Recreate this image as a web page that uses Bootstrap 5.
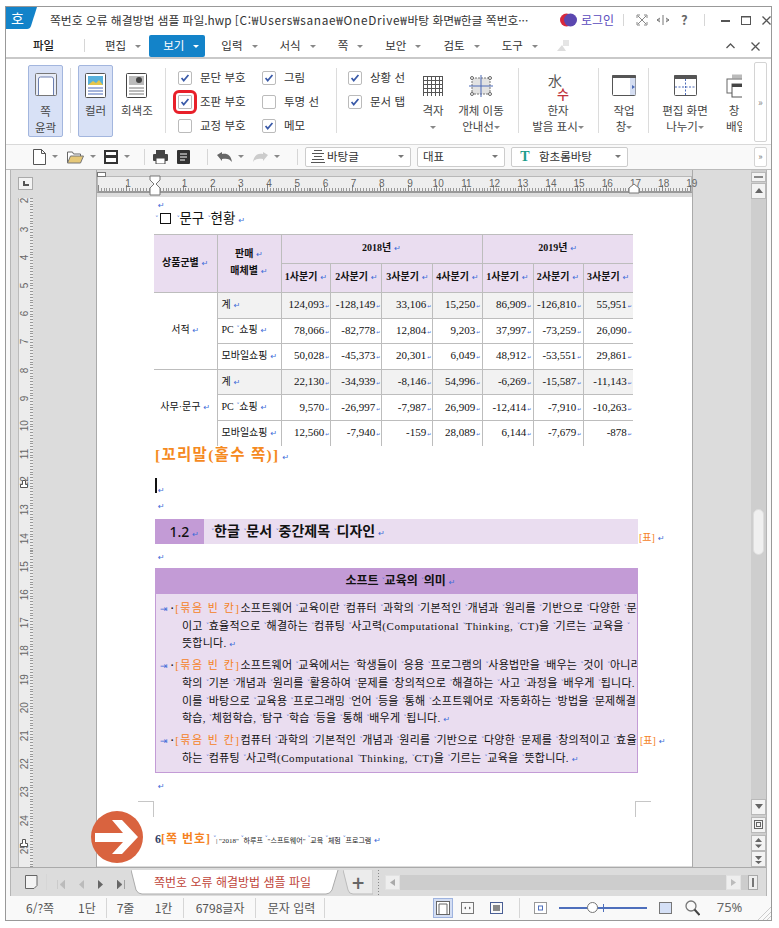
<!doctype html>
<html lang="ko">
<head>
<meta charset="UTF-8" />
<title>쪽번호 오류 해결방법 샘플 파일.hwp</title>
<link href="https://cdn.jsdelivr.net/npm/bootstrap@5.3.0/dist/css/bootstrap.min.css" rel="stylesheet" />
<style>
  html, body { background: #fff; overflow: hidden; }
  body { font-family: "Noto Sans CJK KR", "Liberation Sans", sans-serif; font-size: 11px; color: #333; }
  .hw-win { width: 767px; height: 915px; margin: 6px 0 0 5px; border: 1px solid #999; background: #f9f9f9; }

  /* title + menu */
  .hw-title { height: 28px; background: #fff; padding-bottom: 2px; }
  .hw-logo { width: 31px; flex: none; }
  .hw-logo svg { display: block; }
  .hw-logo-t { position: absolute; left: 5px; top: 1px; color: #fff; font-size: 14px; font-weight: 400; line-height: 20px; }
  .hw-fname { width: 495px; margin-left: 13px; font-size: 11.8px; color: #333; white-space: nowrap; overflow: hidden; }
  .hw-path { letter-spacing: .7px; }
  .hw-orb { margin-left: 15px; }
  .hw-login { margin-left: 4px; font-size: 12px; color: #5a4bbd; width: 34px; white-space: nowrap; }
  .vsep { width: 1px; background: #d6d6d6; flex: none; }
  .vsep-t { height: 12px; margin: 0 8px; }
  .hw-help { margin-left: 11px; font-size: 13px; color: #666; font-weight: 700; }
  .hw-gap-a { margin-left: 8px; }
  .hw-gap-b { margin-left: 11px; }
  .hw-menu { height: 24px; background: #fff; border-bottom: 2px solid #c9c9c9; padding-left: 27px; }
  .mn-i { padding: 0 14px 0 8px; height: 22px; line-height: 20px; font-size: 11.5px; color: #333; white-space: nowrap; flex: none; }
  .mn-first { padding: 0 8px 0 8px; }
  .mn-file { width: 64px; font-size: 11.5px; line-height: 20px; height: 22px; font-weight: 500; color: #222; flex: none; position: relative; }
  .mn-file::after { content: ""; position: absolute; left: 51px; top: 4px; width: 1px; height: 13px; background: #d6d6d6; }
  .mn-act { background: #1383c9; color: #fff; border-radius: 2px; padding: 0 6px 0 14px; margin-right: 8px; }
  .tri { display: inline-block; border: 3px solid transparent; border-top: 3px solid #888; border-bottom: 0; vertical-align: middle; margin-left: 9px; width: 0; height: 0; }
  .mn-act .tri { border-top-color: #fff; }
  .hw-menu-r { gap: 12px; margin-right: 11px; }

  /* ribbon */
  .hw-ribbon { height: 86px; background: #fff; border-bottom: 1px solid #d9d9d9; padding: 6px 4px 3px 22px; }
  .rb-grid { display: grid; grid-template-columns: 35px 15px 35px 40px 25px 84px 74px 12px 65px 40px 56px 19px 60px 20px 32px 16px 58px 29px; height: 73px; }
  .rb-btn { height: 72px; text-align: center; font-size: 11.5px; line-height: 16px; color: #444; padding-top: 7px; border: 1px solid transparent; border-radius: 2px; white-space: nowrap; }
  .rb-btn svg { display: block; margin: 0 auto 4px; }
  .rb-on { background: #d8e1f6; border-color: #a3b6de; }
  .rb-ic { height: 29px; display: flex; align-items: center; justify-content: center; }
  .rb-page svg { margin-bottom: 7px; }
  .rb-grey { margin-left: 7px; }
  .rb-sep { width: 1px; height: 65px; background: #dcdcdc; margin-top: 3px; justify-self: center; }
  .rb-sep-l { justify-self: start; }
  .rb-chk { gap: 8px; height: 24px; font-size: 11.5px; white-space: nowrap; color: #333; }
  .chk { width: 14px; height: 14px; border: 1px solid #bbb; border-radius: 2px; background: #fff; display: block; flex: none; }
  .chk-red { outline: 3px solid #e8202a; outline-offset: 2px; border-radius: 1px; }
  .rb-col { padding-top: 1px; }
  .rb-cut { margin-left: 11px; overflow: hidden; }
  .rb-more { width: 13px; height: 80px; margin-top: -3px; border: 1px solid #d4d4d4; border-radius: 2px; color: #888; font-size: 10px; line-height: 1; }
  .hanja { position: relative; width: 24px; height: 28px; }
  .hanja-a { position: absolute; left: 2px; top: -2px; font-size: 14px; color: #555; line-height: 16px; font-family: "Noto Sans CJK SC", sans-serif; }
  .hanja-b { position: absolute; left: 11px; top: 12px; font-size: 13px; color: #c0303a; line-height: 16px; font-weight: 500; }

  /* toolbar */
  .hw-tools { height: 25px; background: #f9f9f9; border-bottom: 1px solid #bbb; padding-left: 23px; padding-right: 4px; }
  .tb-c { flex: none; height: 20px; }
  .tb-34 { width: 34px; } .tb-37 { width: 37px; } .tb-36 { width: 36px; } .tb-24 { width: 24px; } .tb-22 { width: 22px; }
  .tb-c .tri { margin-left: 6px; }
  .tb-sep { height: 16px; margin: 0 8px; }
  .tb-sep-a { margin: 0 9px 0 8px; }
  .tb-sep-c { margin: 0 7px 0 8px; }
  .cmb { height: 20px; background: #fff; border: 1px solid #ccc; border-radius: 2px; padding: 0 6px 0 5px; font-size: 11.5px; color: #333; gap: 2px; flex: none; }
  .cmb .tri { margin: 0 0 0 auto; border-top-color: #777; }
  .cmb-a { width: 106px; } .cmb-b { width: 88px; margin-left: 6px; } .cmb-c { width: 117px; margin-left: 6px; }
  .t-font { font-family: "Liberation Serif", serif; font-weight: 700; color: #1c9c8c; font-size: 14px; line-height: 16px; width: 16px; text-align: center; }
  .tb-more { width: 13px; height: 20px; border: 1px solid #d4d4d4; border-radius: 2px; background: #fff; margin-left: auto; color: #777; font-size: 9px; line-height: 7px; }

  /* document */
  .ed-frame { padding: 0 4px; background: #f9f9f9; min-height: 0; }
  .ed-inner { border-left: 1px solid #b5b5b5; border-right: 1px solid #b5b5b5; border-bottom: 1px solid #b5b5b5; height: 100%; background: #dcdcdc; min-height: 0; }
  .ed-area { height: 697px; overflow: hidden; position: relative; }
  .v-col { width: 86px; flex: none; padding-left: 7px; border-right: 1px solid #aaa; }
  .rl-corner { width: 15px; height: 13px; margin-top: 7px; background: #f3f3f3; border: 1px solid #aaa; position: relative; }
  .rl-corner::after { content: ""; position: absolute; left: 4px; top: 3px; width: 6px; height: 5px; border-left: 2px solid #555; border-bottom: 2px solid #555; }
  .v-rule { width: 15px; height: 670px; margin-top: 8px; background-color: #ececec; background-image: repeating-linear-gradient(to bottom, #999 0, #999 1px, transparent 1px, transparent 2.82px); background-size: 3px 100%; background-repeat: no-repeat; background-position: right top; border-left: 1px solid #bbb; overflow: hidden; position: relative; }
  .v-num { height: 28.2px; flex: none; writing-mode: vertical-rl; transform: rotate(180deg); font-family: "Liberation Sans", sans-serif; font-size: 10px; color: #666; text-align: center; line-height: 11px; }
  .v-num:first-child { margin-top: -11.5px; }
  .v-mark { position: absolute; left: 1px; }
  .v-mark-a { top: 282px; } .v-mark-b { top: 641px; }
  .p-col { width: 596px; flex: none; min-width: 0; border-right: 1px solid #aaa; position: relative; }
  .h-rule { height: 17px; margin-top: 6px; margin-bottom: 4px; background-color: #eee; border: 1px solid #b8b8b8; border-bottom: 2px solid #999; position: relative; background-image: repeating-linear-gradient(to right, #888 0, #888 1px, transparent 1px, transparent 28.2px), repeating-linear-gradient(to right, #999 0, #999 1px, transparent 1px, transparent 2.82px); background-size: 100% 6px, 100% 3px; background-repeat: no-repeat; background-position: left bottom; }
  .h-nums { padding-left: 16px; font-family: "Liberation Sans", sans-serif; font-size: 10px; color: #666; line-height: 14px; }
  .h-nums span { width: 28.2px; flex: none; text-align: center; }
  .rl-mark { position: absolute; }
  .rl-mark-a { left: 51px; top: -2px; } .rl-mark-b { left: 530px; top: 6px; }
  .rl-mark-c { left: -1px; top: -5px; }
  .pg { background: #fff; height: 669px; padding-left: 58px; position: relative; overflow: hidden; font-family: "Liberation Serif", "Noto Sans CJK KR", serif; color: #111; }
  .doc-line, .doc-tbl { font-family: "Liberation Serif", "Noto Sans CJK KR", serif; }
  .mk-ret { font-family: "DejaVu Sans", sans-serif; color: #3d6bd8; font-size: 8px; font-style: normal; font-weight: 400; margin-left: 3px; letter-spacing: 0; }
  .mk-sp { color: #3d6bd8; font-size: 7px; font-style: normal; font-weight: 400; font-family: "DejaVu Sans", sans-serif; display: inline-block; width: 3px; overflow: visible; vertical-align: 2px; line-height: 1; }
  .pg-r { line-height: 14px; white-space: nowrap; }
  .pg-r1 { height: 11px; }
  .pg-h { height: 22px; font-size: 13.5px; line-height: 22px; margin-bottom: 4px; color: #111; }
  .pg-box { display: inline-block; width: 11px; height: 11px; border: 1px solid #111; vertical-align: -1px; margin: 0 2px 0 2px; }
  .doc-wrap { width: 479px; height: 212px; overflow: hidden; margin-left: -1px; }
  .doc-tbl { width: 479px; table-layout: fixed; margin: 0; font-size: 10px; --bs-table-bg: transparent; --bs-border-color: #bdbdbd; color: #111; border-color: #bdbdbd; }
  .doc-tbl td, .doc-tbl th { padding: 0 1px; vertical-align: middle; line-height: 12px; white-space: nowrap; font-weight: 400; overflow: hidden; }
  .doc-tbl tr > :first-child { border-left: 0; }
  .doc-tbl tr > :last-child { border-right: 0; }
  .doc-tbl .h-c { --bs-table-bg: #eaddf0; text-align: center; font-weight: 700; }
  .doc-tbl .h-tall { line-height: 16px; }
  .doc-tbl .hw-shade { --bs-table-bg: #f2f2f2; }
  .doc-tbl .n-c { text-align: right; font-size: 11px; letter-spacing: 0; }
  .doc-tbl .n-c .mk-ret { font-size: 5px; margin-left: 1px; }
  .doc-tbl .l-c { padding-left: 4px; text-align: left; }
  .doc-tbl .m-c { text-align: center; }
  .doc-tbl .rw-a { height: 29px; } .doc-tbl .rw-b { height: 29px; } .doc-tbl .rw-c { height: 25.6px; }
  .w-63 { width: 63px; } .w-64 { width: 64px; } .w-50 { width: 50px; } .w-51 { width: 51px; } .w-49 { width: 49px; }
  .pg-foot { height: 19px; margin-top: -1px; font-size: 15.5px; font-weight: 700; color: #f58a1f; line-height: 19px; letter-spacing: 1.3px; white-space: nowrap; }
  .orange { color: #f5821f; }
  .pg-cur { height: 22px; padding-top: 11px; margin-top: 7px; position: relative; }
  .pg-cur::before { content: ""; position: absolute; left: 0; top: 7px; width: 2px; height: 15px; background: #111; }
  .pg-blank { height: 21px; line-height: 14px; padding-top: 5px; }
  .head-row { height: 25px; width: 483px; background: #eaddf0; font-size: 14px; font-weight: 700; line-height: 25px; margin-top: 5px; white-space: nowrap; color: #111; overflow: visible; position: relative; }
  .head-n { width: 49px; background: #c39bd6; text-align: right; padding-right: 5px; font-family: "Noto Sans", sans-serif; font-weight: 500; flex: none; margin-right: 7px; }
  .tag-over { position: absolute; left: 484px; top: 12px; font-size: 10px; font-weight: 400; line-height: 14px; }
  .box-wrap { width: 483px; margin-top: 3px; }
  .box-h { height: 26px; background: #c39bd6; text-align: center; padding-left: 8px; font-size: 12px; font-weight: 700; line-height: 26px; color: #111; }
  .box-b { height: 179px; background: #eaddf0; border: 1px solid #c39bd6; border-top: 0; padding-top: 6px; font-size: 11px; }
  .doc-line { height: 17.75px; line-height: 17.75px; white-space: nowrap; width: 481px; padding-left: 26px; letter-spacing: .25px; overflow: hidden; }
  .doc-line .orange { letter-spacing: 1.5px; }
  .doc-line .doc-en { letter-spacing: .55px; }
  .doc-first { padding-left: 4px; }
  .doc-sp { margin-top: 4px; }
  .tab-m { color: #3d6bd8; font-family: "DejaVu Sans", sans-serif; font-size: 9px; letter-spacing: 0; }
  .dot-m { font-size: 10px; margin: 0 1px 0 3px; font-weight: 700; }
  .tag-in { position: absolute; left: 484px; top: 2px; font-size: 10px; line-height: 14px; white-space: nowrap; }
  .box-row { position: relative; overflow: visible; }
  .crop { position: absolute; width: 16px; height: 16px; border-top: 1px solid #c6c6c6; }
  .crop-l { left: 41px; top: 604px; border-right: 1px solid #c6c6c6; }
  .crop-r { left: 538px; top: 604px; border-left: 1px solid #c6c6c6; }
  .foot-line { position: absolute; left: 58px; top: 634px; white-space: nowrap; line-height: 16px; font-size: 7px; color: #222; }
  .foot-n { font-size: 12px; font-weight: 700; color: #34446a; }
  .foot-tag { font-size: 12px; font-weight: 700; letter-spacing: 1px; }
  .arrow-over { position: absolute; left: 80px; top: 641px; z-index: 3; }

  .g-col { width: 58px; flex: none; }
  .s-col { width: 16px; flex: none; background: #cecece; position: relative; }
  .sb-btn { width: 15px; height: 16px; background: #f3f3f3; border: 1px solid #b9b9b9; display: flex; align-items: center; justify-content: center; flex: none; }
  .sb-min { height: 10px; margin-top: 2px; margin-bottom: 1px; }
  .sb-min::before { content: ""; width: 9px; height: 2px; background: #888; }
  .sb-thumb { position: absolute; left: 2px; top: 339px; width: 11px; height: 46px; background: #f0f0f0; border: 1px solid #ddd; border-radius: 6px; }
  .sb-fill { flex: 1 1 auto; }
  .sb-g { margin-top: 2px; }
  .up { width: 0; height: 0; border: 4px solid transparent; border-top: 0; border-bottom: 5px solid #666; }
  .dn { width: 0; height: 0; border: 4px solid transparent; border-bottom: 0; border-top: 5px solid #666; }

  /* tabs */
  .hw-tabs { height: 30px; background: #dcdcdc; border-top: 1px solid #aaa; padding-left: 14px; }
  .tn-c { flex: none; width: 20px; text-align: center; color: #aaa; }
  .tab-sep { height: 16px; margin: 0 4px 0 6px; }
  .hw-tab { width: 212px; height: 25px; margin-left: 0; position: relative; padding-right: 9px; text-align: center; color: #c0453a; font-size: 12px; line-height: 24px; flex: none; }
  .hw-tab svg { position: absolute; left: 0; top: 0; }
  .hw-tab span { position: relative; }
  .tab-add { width: 30px; height: 25px; position: relative; text-align: center; font-size: 17px; color: #666; line-height: 24px; flex: none; }
  .tab-add svg { position: absolute; left: 0; top: 0; }
  .tab-add span { position: relative; font-family: "DejaVu Sans", sans-serif; font-weight: 700; }
  .tab-grip { width: 3px; height: 26px; margin: 0 5px 0 4px; background-image: radial-gradient(#888 .7px, transparent .8px); background-size: 3px 3px; flex: none; }
  .hs-track { width: 373px; height: 15px; background: #cdcdcd; flex: none; }
  .hs-btn { width: 15px; height: 15px; background: #eee; border: 1px solid #e2e2e2; flex: none; }
  .hs-fill { flex: 1 1 auto; }
  .hs-end { width: 10px; height: 15px; background: #eee; border: 1px solid #aaa; margin-left: 7px; flex: none; position: relative; }
  .hs-end::after { content: ""; position: absolute; left: 3px; top: 2px; width: 2px; height: 9px; background: #777; }

  /* status */
  .hw-status { height: 24px; background: #f9f9f9; font-size: 12px; color: #555; white-space: nowrap; }
  .st-c { flex: none; padding-left: 20px; }
  .st-a { padding-left: 20px; width: 72px; }
  .st-sep { height: 20px; flex: none; }
  .st-m1 { margin-left: 10px; }
  .st-b1 { width: 18px; margin-left: 10px; } .st-b2 { width: 18px; margin-left: 20px; }
  .st-w1 { width: 71px; padding-left: 12px; } .st-w2 { width: 68px; padding-left: 12px; }
  .st-right { margin-left: 108px; }
  .st-ic { flex: none; }
  .st-sel { width: 20px; height: 20px; background: #d4def3; border: 1px solid #9eb3df; flex: none; }
  .st-sep-r { margin: 0 14px 0 16px; }
  .slider { width: 88px; height: 2px; background: #4e6fbc; position: relative; flex: none; margin: 0 12px; }
  .slider::before { content: ""; position: absolute; left: 28px; top: -5px; width: 11px; height: 11px; border-radius: 50%; background: #fff; border: 1px solid #777; z-index: 1; }
  .slider::after { content: ""; position: absolute; left: 44px; top: -3px; width: 1px; height: 8px; background: #4e6fbc; }
  .st-zoom { margin-left: 13px; }
  .st-pct { width: 28px; font-size: 13px; color: #666; margin-left: 17px; font-family: "Noto Sans", sans-serif; flex: none; }
  .st-grip { position: absolute; right: 0; bottom: 0; }
</style>
</head>
<body class="m-0">
<div class="hw-win d-flex flex-column position-relative">

  <!-- title bar -->
  <div class="hw-title d-flex align-items-center flex-shrink-0">
    <div class="hw-logo position-relative align-self-start">
      <svg width="31" height="22"><path d="M0 0H31L25 19q-1 3-4 3H0Z" fill="#1383c9"/></svg>
      <span class="hw-logo-t">호</span>
    </div>
    <div class="hw-fname">쪽번호 오류 해결방법 샘플 파일.hwp <span class="hw-path">[C:₩Users₩sanae₩OneDrive₩</span>바탕 화면₩한글 쪽번호···</div>
    <svg class="hw-orb" width="17" height="14"><circle cx="6.5" cy="7" r="6.5" fill="#d8283c"/><circle cx="10.5" cy="7" r="6.5" fill="#5b47b0"/></svg>
    <div class="hw-login">로그인</div>
    <div class="vsep vsep-t"></div>
    <svg width="12" height="12" class="ms-1"><path d="M1 4V1h3M8 1h3v3M11 8v3H8M4 11H1V8M2 2l8 8M10 2l-8 8" fill="none" stroke="#888"/></svg>
    <svg width="14" height="10" class="hw-gap-a"><path d="M7 0v10M1 5h3M10 5h3M4 3L1 5l3 2M10 3l3 2-3 2" fill="none" stroke="#777"/></svg>
    <span class="hw-help">?</span>
    <div class="vsep vsep-t ms-3"></div>
    <svg width="9" height="3" class="hw-gap-a"><rect width="9" height="2" y="1" fill="#555"/></svg>
    <svg width="10" height="9" class="hw-gap-b"><rect x=".5" y=".5" width="9" height="8" fill="none" stroke="#555"/><path d="M0 1h10" stroke="#555"/></svg>
    <svg width="9" height="9" class="hw-gap-b"><path d="M.5.5l8 8M8.5.5l-8 8" stroke="#555" stroke-width="1.3"/></svg>
  </div>

  <!-- menu -->
  <div class="hw-menu d-flex align-items-center">
    <div class="mn-file">파일</div>
    <div class="mn-i mn-first">편집<span class="tri"></span></div>
    <div class="mn-i mn-act">보기<span class="tri"></span></div>
    <div class="mn-i">입력<span class="tri"></span></div>
    <div class="mn-i">서식<span class="tri"></span></div>
    <div class="mn-i">쪽<span class="tri"></span></div>
    <div class="mn-i">보안<span class="tri"></span></div>
    <div class="mn-i">검토<span class="tri"></span></div>
    <div class="mn-i">도구<span class="tri"></span></div>
    <svg width="14" height="14" class="ms-1"><path d="M1 12l5-6 4 6z" fill="#ddd"/><rect x="7" y="1" width="6" height="6" fill="#e5e5e5"/></svg>
    <div class="hw-menu-r d-flex align-items-center ms-auto">
      <svg width="9" height="6"><path d="M.5 5L4.5 1l4 4" fill="none" stroke="#555" stroke-width="1.3"/></svg>
      <svg width="9" height="9" class="ms-1"><path d="M.5.5l8 8M8.5.5l-8 8" stroke="#555" stroke-width="1.3"/></svg>
    </div>
  </div>

  <!-- ribbon -->
  <div class="hw-ribbon d-flex">
    <div class="rb-grid">
      <div class="rb-btn rb-on rb-page">
        <svg width="22" height="23"><rect x=".5" y=".5" width="21" height="22" rx="1" fill="#e8ecf6" stroke="#777"/><path d="M3.5 22V6q0-2 2-2h11q2 0 2 2v16" fill="#fff" stroke="#6c7fb0"/></svg>
        <div>쪽</div><div>윤곽</div>
      </div>
      <div class="rb-sep"></div>
      <div class="rb-btn rb-on">
        <svg width="21" height="25"><rect x=".5" y=".5" width="20" height="24" rx="1" fill="#fff" stroke="#555"/><rect x="3" y="3" width="15" height="9" fill="#58b0dc"/><path d="M3 12l5-4 3 2 3-3 4 5z" fill="#e5c64c"/><path d="M3 15h15M3 18h15M3 21h15" stroke="#4c6bb8"/></svg>
        <div class="mt-1">컬러</div>
      </div>
      <div class="rb-btn rb-grey">
        <svg width="21" height="25"><rect x=".5" y=".5" width="20" height="24" rx="1" fill="#fff" stroke="#444"/><rect x="3" y="3" width="15" height="9" fill="#bbb"/><circle cx="13" cy="7" r="3" fill="#444"/><path d="M3 15h15M3 18h15M3 21h15" stroke="#777"/></svg>
        <div class="mt-1">회색조</div>
      </div>
      <div class="rb-sep"></div>
      <div class="rb-col">
        <div class="rb-chk d-flex align-items-center"><svg class="chk"><use href="#chk-mark"/></svg>문단 부호</div>
        <div class="rb-chk d-flex align-items-center"><svg class="chk chk-red"><use href="#chk-mark"/></svg>조판 부호</div>
        <div class="rb-chk d-flex align-items-center"><svg class="chk"></svg>교정 부호</div>
      </div>
      <div class="rb-col">
        <div class="rb-chk d-flex align-items-center"><svg class="chk"><use href="#chk-mark"/></svg>그림</div>
        <div class="rb-chk d-flex align-items-center"><svg class="chk"></svg>투명 선</div>
        <div class="rb-chk d-flex align-items-center"><svg class="chk"><use href="#chk-mark"/></svg>메모</div>
      </div>
      <div class="rb-sep rb-sep-l"></div>
      <div class="rb-col">
        <div class="rb-chk d-flex align-items-center"><svg class="chk"><use href="#chk-mark"/></svg>상황 선</div>
        <div class="rb-chk d-flex align-items-center"><svg class="chk"><use href="#chk-mark"/></svg>문서 탭</div>
      </div>
      <div class="rb-btn">
        <div class="rb-ic"><svg width="20" height="20"><path d="M0 .5h20M0 4.5h20M0 8.5h20M0 12.5h20M0 16.5h20M.5 0v20M4.5 0v20M8.5 0v20M12.5 0v20M16.5 0v20M19.5 0v20" stroke="#555"/></svg></div>
        <div>격자</div><div><span class="tri ms-0"></span></div>
      </div>
      <div class="rb-btn">
        <div class="rb-ic"><svg width="24" height="22"><rect x="3" y="3" width="18" height="16" fill="#e2e2e2" stroke="#777" stroke-dasharray="2 1"/><path d="M12 0v22M0 11h24" stroke="#4c6bb8"/><g fill="#fff" stroke="#666"><circle cx="3" cy="3" r="1.5"/><circle cx="21" cy="3" r="1.5"/><circle cx="3" cy="19" r="1.5"/><circle cx="21" cy="19" r="1.5"/></g></svg></div>
        <div>개체 이동</div><div>안내선<span class="tri ms-0"></span></div>
      </div>
      <div class="rb-sep"></div>
      <div class="rb-btn">
        <div class="rb-ic"><div class="hanja"><span class="hanja-a">水</span><span class="hanja-b">수</span></div></div>
        <div>한자</div><div>발음 표시<span class="tri ms-0"></span></div>
      </div>
      <div class="rb-sep"></div>
      <div class="rb-btn">
        <div class="rb-ic"><svg width="24" height="21"><rect x=".5" y=".5" width="23" height="20" rx="1" fill="#fff" stroke="#555"/><rect width="24" height="3" rx="1" fill="#555"/><rect x="18" y="3" width="5.5" height="17" fill="#d5def2"/><path d="M20 10l3 2-3 2z" fill="#4c6bb8"/></svg></div>
        <div>작업</div><div>창<span class="tri ms-0"></span></div>
      </div>
      <div class="rb-sep"></div>
      <div class="rb-btn">
        <div class="rb-ic"><svg width="23" height="21"><rect x=".5" y=".5" width="22" height="20" rx="1" fill="#fff" stroke="#555"/><rect width="23" height="4" rx="1" fill="#555"/><path d="M1 12h21M11.500 4v16" stroke="#4c6bb8" stroke-dasharray="2 1.500"/></svg></div>
        <div>편집 화면</div><div>나누기<span class="tri ms-0"></span></div>
      </div>
      <div class="rb-btn rb-cut">
        <div class="rb-ic justify-content-start"><svg width="18" height="24"><rect x="6" y=".5" width="14" height="4" fill="#bbb"/><rect x="1" y="5" width="18" height="14" fill="#fff" stroke="#666"/><rect x="6" y="10" width="14" height="13" fill="#fff" stroke="#555"/><rect x="6" y="10" width="14" height="3" fill="#444"/></svg></div>
        <div>창</div><div>배열</div>
      </div>
    </div>
    <div class="rb-more d-flex align-items-center justify-content-center ms-auto">»</div>
  </div>

  <!-- toolbar -->
  <div class="hw-tools d-flex align-items-center">
    <div class="tb-c tb-34 d-flex align-items-center ps-1"><svg width="13" height="16"><path d="M.5.500h8l4 4v11H.500zM8.500.500v4h4" fill="#fff" stroke="#555"/></svg><span class="tri"></span></div>
    <div class="tb-c tb-37 d-flex align-items-center ps-1"><svg width="17" height="14"><path d="M.5 13V2h5l1 2h7v2" fill="#fff" stroke="#666"/><path d="M.5 13l3-7h13l-3 7z" fill="#e6c878" stroke="#777"/></svg><span class="tri"></span></div>
    <div class="tb-c tb-36 d-flex align-items-center ps-1"><svg width="14" height="14"><rect width="14" height="14" fill="#333"/><rect x="2" y="2" width="10" height="3" fill="#fff"/><rect x="2" y="8" width="10" height="4" fill="#fff"/></svg><span class="tri"></span></div>
    <div class="vsep tb-sep"></div>
    <div class="tb-c tb-24 d-flex align-items-center"><svg width="15" height="14"><path d="M3 0h9v4H3z" fill="#444"/><rect y="4" width="15" height="7" rx="1" fill="#444"/><rect x="3" y="8" width="9" height="6" fill="#fff" stroke="#444"/></svg></div>
    <div class="tb-c tb-22 d-flex align-items-center"><svg width="13" height="14"><rect width="13" height="14" rx="1" fill="#333"/><path d="M3 4h7M3 7h7M3 10h5" stroke="#fff"/></svg></div>
    <div class="vsep tb-sep tb-sep-a"></div>
    <div class="tb-c tb-36 d-flex align-items-center"><svg width="15" height="10"><path d="M0 3l5-3v2c5-1 9 1 10 8-2-3-5-4-10-3v2z" fill="#666"/></svg><span class="tri"></span></div>
    <div class="tb-c tb-36 d-flex align-items-center"><svg width="15" height="10"><path d="M15 3l-5-3v2C5 1 1 3 0 10c2-3 5-4 10-3v2z" fill="#ccc"/></svg><span class="tri"></span></div>
    <div class="vsep tb-sep tb-sep-c"></div>
    <div class="cmb cmb-a d-flex align-items-center"><svg width="14" height="13"><path d="M3 .5h8M1 3.500h12M3 6.500h8M1 9.500h12M0 12.500h14" stroke="#555"/></svg>바탕글<span class="tri"></span></div>
    <div class="cmb cmb-b d-flex align-items-center">대표<span class="tri"></span></div>
    <div class="cmb cmb-c d-flex align-items-center"><span class="t-font">T</span><span class="ms-1">함초롬바탕</span><span class="tri"></span></div>
    <div class="tb-more d-flex align-items-center justify-content-center">»</div>
  </div>

  <!-- editing area -->
  <div class="ed-frame">
    <div class="ed-inner">
      <div class="ed-area d-flex">
        <div class="v-col d-flex flex-column">
          <div class="rl-corner"></div>
          <div class="v-rule d-flex flex-column">
            <div class="v-num">2</div><div class="v-num">3</div><div class="v-num">4</div><div class="v-num">5</div><div class="v-num">6</div><div class="v-num">7</div><div class="v-num">8</div><div class="v-num">9</div><div class="v-num">10</div><div class="v-num">11</div><div class="v-num">12</div><div class="v-num">13</div><div class="v-num">14</div><div class="v-num">15</div><div class="v-num">16</div><div class="v-num">17</div><div class="v-num">18</div><div class="v-num">19</div><div class="v-num">20</div><div class="v-num">21</div><div class="v-num">22</div><div class="v-num">23</div><div class="v-num">24</div><div class="v-num">25</div>
            <svg class="v-mark v-mark-a" width="8" height="8"><path d="M.5 7.500v-3h2v-4h3v4h2v3z" fill="#fff" stroke="#555"/></svg>
            <svg class="v-mark v-mark-b" width="8" height="8"><path d="M.5 7.500v-3h2v-4h3v4h2v3z" fill="#fff" stroke="#555"/></svg>
          </div>
        </div>

        <div class="p-col">
          <div class="h-rule">
            <div class="h-nums d-flex">
              <span>1</span><span></span><span>1</span><span>2</span><span>3</span><span>4</span><span>5</span><span>6</span><span>7</span><span>8</span><span>9</span><span>10</span><span>11</span><span>12</span><span>13</span><span>14</span><span>15</span><span>16</span><span>17</span><span>18</span><span>19</span>
            </div>
            <svg class="rl-mark rl-mark-c" width="9" height="6"><rect x=".5" y=".5" width="8" height="4" fill="#fff" stroke="#777"/></svg>
            <svg class="rl-mark rl-mark-a" width="12" height="22"><path d="M1 1h10v4L7 9l4 4v7H1v-7l4-4-4-4z" fill="#fff" stroke="#777"/></svg>
            <svg class="rl-mark rl-mark-b" width="12" height="11"><path d="M1 10V5l5-4 5 4v5z" fill="#fff" stroke="#777"/></svg>
          </div>

          <div class="pg hw-marks">
            <div class="pg-r pg-r1">¶</div>
            <div class="pg-h"><i class="mk-sp">ˇ</i><span class="pg-box"></span>~문구~현황 ¶</div>
            <div class="doc-wrap">
              <table class="table table-bordered doc-tbl">
                <colgroup><col class="w-63"><col class="w-64"><col class="w-50"><col class="w-51"><col class="w-51"><col class="w-49"><col class="w-51"><col class="w-50"><col class="w-50"></colgroup>
                <tr class="rw-a"><td class="h-c" rowspan="2">상품군별 ¶</td><td class="h-c h-tall" rowspan="2">판매 ¶<br>매체별 ¶</td><td class="h-c" colspan="4">2018년 ¶</td><td class="h-c" colspan="3">2019년 ¶</td></tr>
                <tr class="rw-b"><td class="h-c">1사분기 ¶</td><td class="h-c">2사분기 ¶</td><td class="h-c">3사분기 ¶</td><td class="h-c">4사분기 ¶</td><td class="h-c">1사분기 ¶</td><td class="h-c">2사분기 ¶</td><td class="h-c">3사분기 ¶</td></tr>
                <tr class="rw-c"><td class="m-c" rowspan="3">서적 ¶</td><td class="l-c hw-shade">계 ¶</td><td class="n-c hw-shade">124,093¶</td><td class="n-c hw-shade">-128,149¶</td><td class="n-c hw-shade">33,106¶</td><td class="n-c hw-shade">15,250¶</td><td class="n-c hw-shade">86,909¶</td><td class="n-c hw-shade">-126,810¶</td><td class="n-c hw-shade">55,951¶</td></tr>
                <tr class="rw-c"><td class="l-c">PC~쇼핑 ¶</td><td class="n-c">78,066¶</td><td class="n-c">-82,778¶</td><td class="n-c">12,804¶</td><td class="n-c">9,203¶</td><td class="n-c">37,997¶</td><td class="n-c">-73,259¶</td><td class="n-c">26,090¶</td></tr>
                <tr class="rw-c"><td class="l-c">모바일쇼핑 ¶</td><td class="n-c">50,028¶</td><td class="n-c">-45,373¶</td><td class="n-c">20,301¶</td><td class="n-c">6,049¶</td><td class="n-c">48,912¶</td><td class="n-c">-53,551¶</td><td class="n-c">29,861¶</td></tr>
                <tr class="rw-c"><td class="m-c" rowspan="3">사무·문구 ¶</td><td class="l-c hw-shade">계 ¶</td><td class="n-c hw-shade">22,130¶</td><td class="n-c hw-shade">-34,939¶</td><td class="n-c hw-shade">-8,146¶</td><td class="n-c hw-shade">54,996¶</td><td class="n-c hw-shade">-6,269¶</td><td class="n-c hw-shade">-15,587¶</td><td class="n-c hw-shade">-11,143¶</td></tr>
                <tr class="rw-c"><td class="l-c">PC~쇼핑 ¶</td><td class="n-c">9,570¶</td><td class="n-c">-26,997¶</td><td class="n-c">-7,987¶</td><td class="n-c">26,909¶</td><td class="n-c">-12,414¶</td><td class="n-c">-7,910¶</td><td class="n-c">-10,263¶</td></tr>
                <tr class="rw-c"><td class="l-c">모바일쇼핑 ¶</td><td class="n-c">12,560¶</td><td class="n-c">-7,940¶</td><td class="n-c">-159¶</td><td class="n-c">28,089¶</td><td class="n-c">6,144¶</td><td class="n-c">-7,679¶</td><td class="n-c">-878¶</td></tr>
              </table>
            </div>
            <div class="pg-foot">[꼬리말(홀수 쪽)] ¶</div>
            <div class="pg-r pg-cur">¶</div>
            <div class="pg-r pg-blank">¶</div>
            <div class="head-row d-flex">
              <div class="head-n">1.2 ¶</div><div>~한글~문서~중간제목~디자인 ¶</div>
              <span class="tag-over"><span class="orange">[표]</span> ¶</span>
            </div>
            <div class="pg-r pg-blank">¶</div>
            <div class="box-wrap">
              <div class="box-h">소프트~교육의~의미 ¶</div>
              <div class="box-b">
                <div class="doc-line doc-first"><span class="tab-m">⇥</span><span class="dot-m">·</span><span class="orange">[묶음 빈 칸]</span>소프트웨어~교육이란~컴퓨터~과학의~기본적인~개념과~원리를~기반으로~다양한~문제를</div>
                <div class="doc-line">이고~효율적으로~해결하는~컴퓨팅~사고력<span class="doc-en">(Computational~Thinking,~CT)</span>을~기르는~교육을~</div>
                <div class="doc-line">뜻합니다. ¶</div>
                <div class="doc-line doc-first doc-sp"><span class="tab-m">⇥</span><span class="dot-m">·</span><span class="orange">[묶음 빈 칸]</span>소프트웨어~교육에서는~학생들이~응용~프로그램의~사용법만을~배우는~것이~아니라</div>
                <div class="doc-line">학의~기본~개념과~원리를~활용하여~문제를~창의적으로~해결하는~사고~과정을~배우게~됩니다.~</div>
                <div class="doc-line">이를~바탕으로~교육용~프로그래밍~언어~등을~통해~소프트웨어로~자동화하는~방법을~문제해결</div>
                <div class="doc-line">학습,~체험학습,~탐구~학습~등을~통해~배우게~됩니다. ¶</div>
                <div class="box-row doc-sp">
                  <div class="doc-line doc-first"><span class="tab-m">⇥</span><span class="dot-m">·</span><span class="orange">[묶음 빈 칸]</span>컴퓨터~과학의~기본적인~개념과~원리를~기반으로~다양한~문제를~창의적이고~효율적으로</div>
                  <span class="tag-in"><span class="orange">[표]</span> ¶</span>
                </div>
                <div class="doc-line">하는~컴퓨팅~사고력<span class="doc-en">(Computational~Thinking,~CT)</span>을~기르는~교육을~뜻합니다. ¶</div>
              </div>
            </div>
            <div class="pg-r pg-blank">¶</div>
            <div class="crop crop-l"></div>
            <div class="crop crop-r"></div>
            <div class="foot-line"><span class="foot-n">6</span><span class="foot-tag orange">[쪽 번호]</span>~| "2018"~하루프~"스프트웨어"~교육~체험~프로그램 ¶</div>
          </div>
        </div>

        <div class="g-col"></div>

        <div class="s-col d-flex flex-column">
          <div class="sb-btn sb-min"></div>
          <div class="sb-btn"><span class="up"></span></div>
          <div class="sb-fill"></div>
          <div class="sb-thumb"></div>
          <div class="sb-btn"><span class="dn"></span></div>
          <div class="sb-btn sb-g"><svg width="9" height="9"><rect x=".5" y=".5" width="8" height="8" fill="none" stroke="#666"/><rect x="2.500" y="2.500" width="4" height="4" fill="none" stroke="#666"/></svg></div>
          <div class="sb-btn sb-g"><svg width="9" height="10"><path d="M4.500 0L8 4H1zM0 5.500h9M4.500 10L1 6.500h7z" fill="#666"/></svg></div>
          <div class="sb-btn"><svg width="9" height="10"><path d="M4.500 6L8 2H1zM0 .5h9M4.500 10L1 7h7z" fill="#666"/></svg></div>
        </div>

        <svg class="arrow-over" width="52" height="52"><circle cx="26" cy="26" r="26" fill="#d9633f"/><path d="M4 22H32L21 9H31L47 26L31 43H21L32 31H4Z" fill="#fff"/></svg>
      </div>

      <!-- sheet tabs -->
      <div class="hw-tabs d-flex align-items-center">
        <svg width="13" height="14" class="flex-shrink-0"><path d="M.5.5h11.500v10l-3 3H.500z" fill="#f4f4f4" stroke="#666"/></svg>
        <div class="vsep tab-sep ms-2"></div>
        <div class="tn-c"><svg width="8" height="9"><path d="M.5 0v9M8 0L3 4.500 8 9z" fill="#bbb" stroke="#bbb" stroke-width=".5"/></svg></div>
        <div class="tn-c"><svg width="6" height="9"><path d="M6 0L1 4.500 6 9z" fill="#bbb"/></svg></div>
        <div class="tn-c"><svg width="6" height="9"><path d="M0 0l5 4.500L0 9z" fill="#666"/></svg></div>
        <div class="tn-c"><svg width="8" height="9"><path d="M0 0l5 4.500L0 9zM7.500 0v9" fill="#666" stroke="#666" stroke-width=".5"/></svg></div>
        <div class="hw-tab">
          <svg width="212" height="25"><path d="M0 0L5 20q2 4 6 4H195q4 0 6-4L207 0" fill="#fff" stroke="#aaa"/></svg>
          <span>쪽번호 오류 해결방법 샘플 파일</span>
        </div>
        <div class="tab-add">
          <svg width="30" height="25"><path d="M0 0L5 20q1 4 5 4H30V0" fill="#ececec" stroke="#bbb"/></svg>
          <span>+</span>
        </div>
        <div class="tab-grip"></div>
        <div class="hs-track d-flex">
          <div class="hs-btn d-flex align-items-center justify-content-center"><svg width="5" height="7"><path d="M5 0L0 3.500 5 7z" fill="#aaa"/></svg></div>
          <div class="hs-fill"></div>
          <div class="hs-btn d-flex align-items-center justify-content-center"><svg width="5" height="7"><path d="M0 0l5 3.500L0 7z" fill="#bbb"/></svg></div>
          <div class="hs-end"></div>
        </div>
      </div>
    </div>
  </div>

  <!-- status bar -->
  <div class="hw-status d-flex align-items-center position-relative">
    <div class="st-c st-a">6/?쪽</div>
    <div class="st-c ps-0">1단</div>
    <div class="vsep st-sep st-m1"></div>
    <div class="st-c st-b1 p-0">7줄</div>
    <div class="st-c st-b2 p-0">1칸</div>
    <div class="vsep st-sep st-m1"></div>
    <div class="st-c st-w1">6798글자</div>
    <div class="vsep st-sep"></div>
    <div class="st-c st-w2">문자 입력</div>
    <div class="vsep st-sep"></div>
    <div class="st-right d-flex align-items-center">
      <div class="st-sel d-flex align-items-center justify-content-center"><svg width="14" height="14"><rect x=".5" y=".5" width="13" height="13" fill="#fff" stroke="#666"/><path d="M3 13V3h8v10" fill="none" stroke="#666"/></svg></div>
      <svg class="st-ic ms-2" width="13" height="12"><rect x=".5" y=".5" width="12" height="11" fill="none" stroke="#777"/><path d="M3 6l2-1.500v3zM10 6L8 4.500v3z" fill="#666"/></svg>
      <svg class="st-ic ms-3" width="13" height="12"><rect x=".5" y=".5" width="12" height="11" fill="none" stroke="#4a5f95"/><rect x="3" y="3" width="7" height="6" fill="#888"/></svg>
      <div class="vsep st-sep st-sep-r"></div>
      <svg class="st-ic" width="13" height="12"><rect x=".5" y=".5" width="12" height="11" fill="#fff" stroke="#999"/><rect x="4.500" y="4" width="4" height="4" fill="none" stroke="#4e6fbc"/></svg>
      <div class="slider"></div>
      <svg class="st-ic" width="13" height="12"><rect x=".5" y=".5" width="12" height="11" fill="#d5e0f6" stroke="#777"/></svg>
      <svg class="st-ic st-zoom" width="15" height="16"><circle cx="6" cy="6" r="5" fill="none" stroke="#777" stroke-width="1.300"/><path d="M9.500 9.500L14.500 15" stroke="#444" stroke-width="2"/></svg>
      <div class="st-pct">75%</div>
    </div>
    <svg class="st-grip" width="13" height="13"><path d="M13 0L0 13M13 5L5 13M13 9L9 13" stroke="#ccc"/></svg>
  </div>
</div>

<svg width="0" height="0" class="position-absolute">
  <symbol id="chk-mark" viewBox="0 0 14 14"><path d="M3 7l2.500 3L11 3.500" fill="none" stroke="#3a5aa8" stroke-width="2"/></symbol>
</svg>

<script src="https://cdn.jsdelivr.net/npm/bootstrap@5.3.0/dist/js/bootstrap.bundle.min.js"></script>
<script>
  // hwp control marks: ~ is a visible space, ¶ is a return mark
  document.querySelectorAll(".hw-marks").forEach((el) => {
    el.innerHTML = el.innerHTML
      .replaceAll("~", ' <i class="mk-sp">ˇ</i>')
      .replaceAll(" ¶", '<i class="mk-ret">↵</i>')
      .replaceAll("¶", '<i class="mk-ret">↵</i>');
  });
</script>
</body>
</html>
